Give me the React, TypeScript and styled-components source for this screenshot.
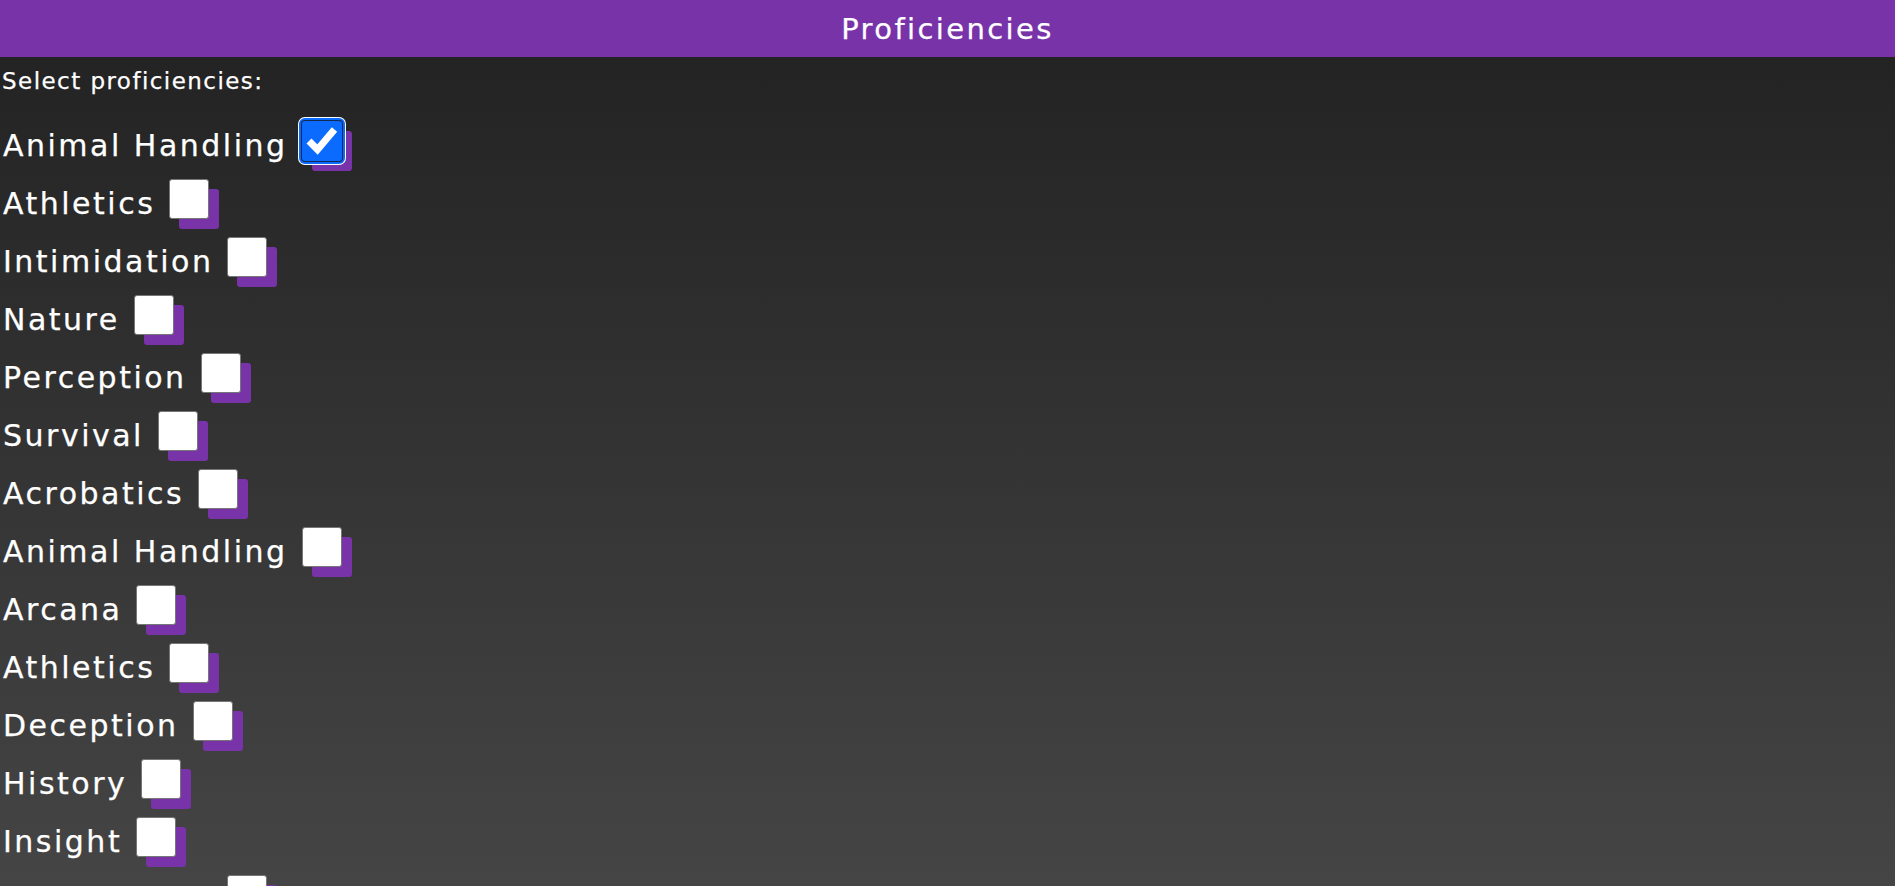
import { useState } from "react";
import styled, { createGlobalStyle } from "styled-components";

const skills = [
  "Animal Handling",
  "Athletics",
  "Intimidation",
  "Nature",
  "Perception",
  "Survival",
  "Acrobatics",
  "Animal Handling",
  "Arcana",
  "Athletics",
  "Deception",
  "History",
  "Insight",
  "Intimidation",
  "Investigation",
  "Medicine",
  "Nature",
  "Perception",
];

const App = () => {
  const [checked, setChecked] = useState<boolean[]>(skills.map((_, i) => i === 0));

  const toggle = (index: number) => {
    setChecked((prev) => prev.map((v, i) => (i === index ? !v : v)));
  };

  return (
    <>
      <GlobalStyle />
      <StyledPage>
        <Header>
          <HeaderText>Proficiencies</HeaderText>
        </Header>

        <Prompt>Select proficiencies:</Prompt>

        <SkillList>
          {skills.map((skill, i) => (
            <SkillRow key={i} onClick={() => toggle(i)}>
              <SkillName>{skill}</SkillName>
              <CheckBox $checked={checked[i]} $focused={i === 0}>
                {checked[i] && (
                  <svg width="40" height="40" viewBox="0 0 40 40">
                    <polyline
                      points="7,20 15.5,28.5 32.5,8.5"
                      fill="none"
                      stroke="#ffffff"
                      strokeWidth="7"
                      strokeLinejoin="miter"
                    />
                  </svg>
                )}
              </CheckBox>
            </SkillRow>
          ))}
        </SkillList>
      </StyledPage>
    </>
  );
};

export default App;

const GlobalStyle = createGlobalStyle`
  html, body {
    margin: 0;
    padding: 0;
    background: #444444;
  }

  * {
    box-sizing: border-box;
  }
`;

const StyledPage = styled.div`
  min-height: 100vh;
  background: linear-gradient(180deg, #212121 0%, #454545 100%) top / 100% 100vh no-repeat, #454545;
  color: #ffffff;
  font-family: "DejaVu Sans", "Noto Sans", sans-serif;
  -webkit-text-stroke: 0.25px #ffffff;
`;

const Header = styled.header`
  height: 57px;
  background-color: #7833a9;
  display: flex;
  justify-content: center;
  align-items: center;
`;

const HeaderText = styled.h1`
  margin: 0;
  font-size: 29px;
  font-weight: 400;
  letter-spacing: 2.4px;
  color: #ffffff;
`;

const Prompt = styled.p`
  margin: 11px 0 0;
  padding-left: 2px;
  font-size: 23px;
  letter-spacing: 1.45px;
  line-height: normal;
`;

const SkillList = styled.div`
  display: flex;
  flex-direction: column;
  padding-top: 18px;
  padding-left: 3px;
`;

const SkillRow = styled.label`
  height: 58px;
  display: flex;
  align-items: center;
  gap: 14px;
  cursor: pointer;
`;

const SkillName = styled.span`
  font-size: 30px;
  letter-spacing: 2.5px;
  padding-top: 9px;
`;

const CheckBox = styled.span<{ $checked: boolean; $focused: boolean }>`
  width: 40px;
  height: 40px;
  flex-shrink: 0;
  display: flex;
  align-items: center;
  justify-content: center;
  border-radius: 3px;
  background-color: ${({ $checked }) => ($checked ? "#0b6bff" : "#ffffff")};
  border: ${({ $checked }) => ($checked ? "none" : "1px solid #767676")};
  box-shadow: ${({ $focused }) =>
    $focused
      ? "0 0 0 1px #15294f, 0 0 0 3px #0b6bff, 0 0 0 4px #ffffff, 10px 10px 0 #7833a9"
      : "10px 10px 0 #7833a9"};
`;
